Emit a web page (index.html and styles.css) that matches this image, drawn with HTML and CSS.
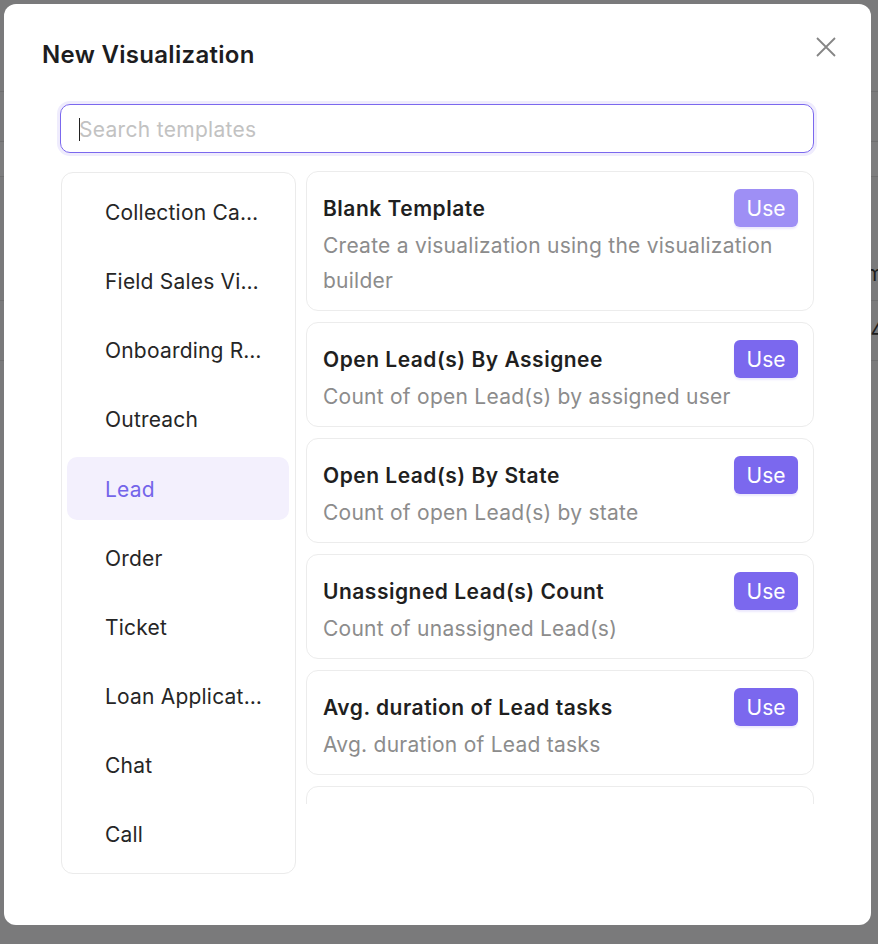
FILE: index.html
```html
<!DOCTYPE html>
<html>

<head>
    <link rel="stylesheet" href="styles.css">
</head>

<body>
    <div class="backdrop">
        <div class="bg_row bg_top"></div>
        <div class="bg_row bg_line"></div>
        <div class="bg_row bg_thin"></div>
        <div class="bg_row bg_text bg_big"><span>m</span></div>
        <div class="bg_row bg_text"><span>4</span></div>
    </div>

    <div class="modal">
        <div class="modal_header">
            <h1>New Visualization</h1>
            <button class="close" aria-label="Close">
                <svg width="20" height="20" viewBox="0 0 20 20">
                    <path d="M1 1 L19 19 M19 1 L1 19" stroke="#858585" stroke-width="1.8" fill="none" />
                </svg>
            </button>
        </div>

        <div class="modal_body">
            <div class="search">
                <span class="caret"></span>
                <input type="text" placeholder="Search templates">
            </div>

            <div class="panes">
                <ul class="cats">
                    <li>Collection Campaigns</li>
                    <li>Field Sales Visits</li>
                    <li>Onboarding Requests</li>
                    <li>Outreach</li>
                    <li class="active">Lead</li>
                    <li>Order</li>
                    <li>Ticket</li>
                    <li>Loan Applications</li>
                    <li>Chat</li>
                    <li>Call</li>
                </ul>

                <div class="templates">
                    <div class="card">
                        <div class="card_head">
                            <div class="title">Blank Template</div>
                            <button class="use light">Use</button>
                        </div>
                        <div class="desc">Create a visualization using the visualization builder</div>
                    </div>
                    <div class="card">
                        <div class="card_head">
                            <div class="title">Open Lead(s) By Assignee</div>
                            <button class="use">Use</button>
                        </div>
                        <div class="desc">Count of open Lead(s) by assigned user</div>
                    </div>
                    <div class="card">
                        <div class="card_head">
                            <div class="title">Open Lead(s) By State</div>
                            <button class="use">Use</button>
                        </div>
                        <div class="desc">Count of open Lead(s) by state</div>
                    </div>
                    <div class="card">
                        <div class="card_head">
                            <div class="title">Unassigned Lead(s) Count</div>
                            <button class="use">Use</button>
                        </div>
                        <div class="desc">Count of unassigned Lead(s)</div>
                    </div>
                    <div class="card">
                        <div class="card_head">
                            <div class="title">Avg. duration of Lead tasks</div>
                            <button class="use">Use</button>
                        </div>
                        <div class="desc">Avg. duration of Lead tasks</div>
                    </div>
                    <div class="card">
                        <div class="card_head">
                            <div class="title">Lead(s) Created Over Time</div>
                            <button class="use">Use</button>
                        </div>
                        <div class="desc">Count of Lead(s) created per day</div>
                    </div>
                </div>
            </div>
        </div>
    </div>
</body>

</html>
```

FILE: styles.css
```css
body {
    margin: 0;
    background: #7a7a7b;
    font-family: Inter, "Liberation Sans", sans-serif;
    height: 944px;
    overflow: hidden;
}

/* page behind the overlay */
.bg_row {
    border-bottom: 1px solid #6f6f70;
}

.bg_top {
    height: 91px;
}

.bg_line {
    height: 49px;
}

.bg_thin {
    height: 34px;
    background: #7d7d7e;
}

.bg_text {
    height: 59px;
    text-align: right;
    font-size: 21px;
    line-height: 59px;
    color: #1c1c1c;
}

.bg_big {
    height: 124px;
    line-height: 30px;
    box-sizing: border-box;
    padding-top: 82px;
}

.bg_text span {
    margin-right: -6px;
}

.modal {
    position: absolute;
    top: 4px;
    left: 4px;
    width: 867px;
    height: 921px;
    background: #fff;
    border-radius: 12px;
}

.modal_header {
    padding: 36px 38px 0 38px;
}

.modal_header h1 {
    margin: 0;
    font-size: 24px;
    line-height: 29px;
    font-weight: 600;
    letter-spacing: 0.3px;
    color: #1d1d1f;
}

.close {
    position: absolute;
    top: 32px;
    right: 34px;
    width: 22px;
    height: 22px;
    padding: 1px;
    border: none;
    background: none;
}

.modal_body {
    padding: 35px 57px 0 56px;
}

.search {
    position: relative;
    height: 49px;
    border: 1.5px solid #7b68ee;
    border-radius: 10px;
    box-shadow: 0 0 0 3px #efecfd;
    box-sizing: border-box;
    display: flex;
    align-items: center;
    padding-left: 18px;
}

.search input {
    flex: 1;
    border: none;
    outline: none;
    font-family: inherit;
    font-size: 21px;
    letter-spacing: 0.3px;
    padding: 0;
    margin-top: 2px;
    color: #222;
}

.search input::placeholder {
    color: #c2c2c2;
}

.caret {
    position: absolute;
    left: 18px;
    top: 13px;
    width: 1px;
    height: 23px;
    background: #222;
}

.panes {
    display: flex;
    gap: 10px;
    margin-top: 19px;
}

.cats {
    list-style: none;
    margin: 0 0 0 1px;
    padding: 7px 6px 7px 5px;
    width: 235px;
    height: 702px;
    box-sizing: border-box;
    border: 1px solid #ebebeb;
    border-radius: 12px;
    display: flex;
    flex-direction: column;
    gap: 5.5px;
}

.cats li {
    height: 64px;
    line-height: 66px;
    padding: 0 22px 0 38px;
    font-size: 21px;
    letter-spacing: 0.2px;
    color: #262626;
    white-space: nowrap;
    overflow: hidden;
    text-overflow: ellipsis;
    border-radius: 10px;
}

.cats li.active {
    background: #f3f0fd;
    color: #7465ea;
}

.templates {
    flex: 1;
    height: 633px;
    overflow: hidden;
    display: flex;
    flex-direction: column;
    gap: 11px;
    margin-top: -1px;
}

.card {
    flex-shrink: 0;
    border: 1px solid #ececec;
    border-radius: 12px;
    padding: 17px 15px 12px 16px;
}

.card_head {
    display: flex;
    align-items: center;
    justify-content: space-between;
}

.title {
    font-size: 21px;
    line-height: 32px;
    font-weight: 600;
    letter-spacing: 0.5px;
    color: #1f1f1f;
    margin-top: 2px;
}

.desc {
    font-size: 21px;
    line-height: 35px;
    letter-spacing: 0.25px;
    color: #8c8c8c;
    margin-top: 1px;
}

.use {
    width: 64px;
    height: 38px;
    border: none;
    border-radius: 6px;
    background: #7b68ee;
    color: #fff;
    font-family: inherit;
    font-size: 21px;
    padding: 0;
    box-shadow: 0 2px 2px #ede9fd;
}

.use.light {
    background: #9e8ff5;
}
```
